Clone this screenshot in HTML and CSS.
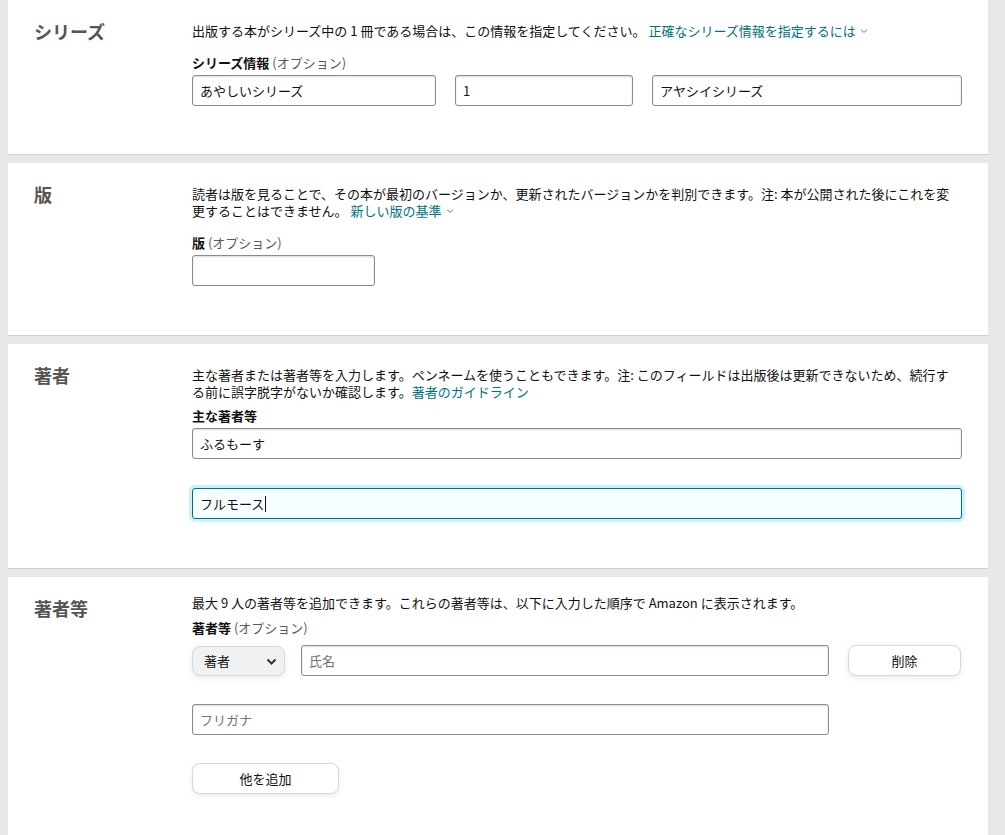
FILE: index.html
```html
<!DOCTYPE html>
<html lang="ja">
<head>
  <meta charset="UTF-8">
  <meta name="viewport" content="width=device-width, initial-scale=1" />
  <title>本の詳細</title>
  <link rel="stylesheet" href="styles.css">
</head>
<body>
  <div class="page">
    <!-- シリーズ -->
    <section class="card card-series">
      <h2 class="card-title">シリーズ</h2>
      <div class="card-body">
        <p class="desc">出版する本がシリーズ中の 1 冊である場合は、この情報を指定してください。 <a href="#" class="more">正確なシリーズ情報を指定するには<svg class="chev" width="8" height="6" viewBox="0 0 8 6"><path d="M1 1.5l3 3 3-3" fill="none" stroke="#767676" stroke-width="1"/></svg></a></p>
        <label class="field-label">シリーズ情報 <span class="opt">(オプション)</span></label>
        <div class="series-row">
          <input type="text" class="text-input" value="あやしいシリーズ">
          <input type="text" class="text-input" value="1">
          <input type="text" class="text-input" value="アヤシイシリーズ">
        </div>
      </div>
    </section>

    <!-- 版 -->
    <section class="card">
      <h2 class="card-title">版</h2>
      <div class="card-body">
        <p class="desc">読者は版を見ることで、その本が最初のバージョンか、更新されたバージョンかを判別できます。注: 本が公開された後にこれを変更することはできません。 <a href="#" class="more">新しい版の基準<svg class="chev" width="8" height="6" viewBox="0 0 8 6"><path d="M1 1.5l3 3 3-3" fill="none" stroke="#767676" stroke-width="1"/></svg></a></p>
        <label class="field-label">版 <span class="opt">(オプション)</span></label>
        <input type="text" class="text-input edition-input">
      </div>
    </section>

    <!-- 著者 -->
    <section class="card">
      <h2 class="card-title">著者</h2>
      <div class="card-body">
        <p class="desc">主な著者または著者等を入力します。ペンネームを使うこともできます。注: このフィールドは出版後は更新できないため、続行す<br>る前に誤字脱字がないか確認します。<a href="#" class="more">著者のガイドライン</a></p>
        <label class="field-label tight">主な著者等</label>
        <input type="text" class="text-input full" value="ふるもーす">
        <div class="focus-wrap">
          <input type="text" class="text-input full is-focused" value="フルモース">
          <span class="caret"></span>
        </div>
      </div>
    </section>

    <!-- 著者等 -->
    <section class="card card-last">
      <h2 class="card-title">著者等</h2>
      <div class="card-body">
        <p class="desc desc-up">最大 9 人の著者等を追加できます。これらの著者等は、以下に入力した順序で Amazon に表示されます。</p>
        <label class="field-label contrib-label">著者等 <span class="opt">(オプション)</span></label>
        <div class="contrib-row">
          <div class="select-wrap">
            <select class="role-select">
              <option>著者</option>
              <option>編集</option>
              <option>翻訳</option>
            </select>
            <svg class="select-chev" width="11" height="7" viewBox="0 0 11 7"><path d="M1.5 1.5l4 4 4-4" fill="none" stroke="#333" stroke-width="2"/></svg>
          </div>
          <input type="text" class="text-input name-input" placeholder="氏名">
          <button class="btn btn-delete">削除</button>
        </div>
        <input type="text" class="text-input kana-input" placeholder="フリガナ">
        <button class="btn btn-add">他を追加</button>
      </div>
    </section>
  </div>
</body>
</html>
```

FILE: styles.css
```css
* {
  box-sizing: border-box;
}

body {
  margin: 0;
  background: #e8e8e8;
  font-family: "Noto Sans CJK JP", "Noto Sans", "Liberation Sans", sans-serif;
  font-size: 13px;
  color: #0f1111;
}

.page {
  width: 980px;
  margin-left: 8px;
}

.card {
  display: flex;
  background: #fff;
  border-bottom: 1px solid #cfcfcf;
  padding: 22px 27px 49px 26px;
  margin-bottom: 8px;
}

.card-series {
  padding-bottom: 48px;
}

.card-last {
  margin-bottom: 0;
  min-height: 260px;
}

.card-title {
  width: 158px;
  flex-shrink: 0;
  margin: 0;
  font-size: 18px;
  line-height: 18px;
  font-weight: 700;
  color: #555;
}

.card-body {
  flex: 1;
  display: flex;
  flex-direction: column;
  align-items: flex-start;
}

.desc {
  margin: 0 0 15px;
  line-height: 17px;
  width: 758px;
}

.desc-up {
  margin-top: -5px;
  margin-bottom: 8px;
}

.more {
  color: #007185;
  text-decoration: none;
}

.chev {
  margin-left: 4px;
  vertical-align: 2px;
}

.field-label {
  font-weight: 700;
  line-height: 17px;
  margin-bottom: 4px;
}

.field-label.tight {
  margin-top: -8px;
}

.contrib-label {
  margin-bottom: 9px;
}

.opt {
  font-weight: 400;
  color: #565959;
}

.text-input {
  height: 31px;
  padding: 0 7px;
  border: 1px solid #888c8c;
  border-radius: 3px;
  box-shadow: 0 1px 2px rgba(15, 17, 17, 0.15) inset;
  font-family: inherit;
  font-size: 13px;
  color: #0f1111;
  background: #fff;
  outline: none;
}

.text-input::placeholder {
  color: #6f7373;
}

.series-row {
  display: grid;
  grid-template-columns: 244px 178px 310px;
  column-gap: 19px;
}

.edition-input {
  width: 183px;
}

.full {
  width: 770px;
}

.focus-wrap {
  position: relative;
  margin-top: 29px;
}

.is-focused {
  background: #f7feff;
  border-color: #007185;
  box-shadow: 0 0 0 3px #c8f3fa;
}

.caret {
  position: absolute;
  left: 73px;
  top: 8px;
  width: 1px;
  height: 16px;
  background: #0f1111;
}

.contrib-row {
  display: flex;
  align-items: center;
  width: 769px;
  height: 31px;
}

.select-wrap {
  position: relative;
  width: 93px;
  margin-right: 16px;
}

.role-select {
  appearance: none;
  -webkit-appearance: none;
  display: block;
  width: 93px;
  height: 30px;
  padding: 0 0 0 11px;
  border: 1px solid #d5d9d9;
  border-radius: 8px;
  background: #f0f2f2;
  box-shadow: 0 2px 5px rgba(213, 217, 217, 0.5);
  font-family: inherit;
  font-size: 13px;
  color: #0f1111;
}

.select-chev {
  position: absolute;
  right: 8px;
  top: 12px;
  pointer-events: none;
}

.name-input {
  width: 528px;
}

.btn {
  height: 31px;
  border: 1px solid #d5d9d9;
  border-radius: 8px;
  background: #fff;
  box-shadow: 0 2px 5px rgba(213, 217, 217, 0.5);
  font-family: inherit;
  font-size: 13px;
  color: #0f1111;
  cursor: pointer;
}

.btn-delete {
  width: 113px;
  margin-left: 19px;
}

.kana-input {
  width: 637px;
  margin-top: 28px;
}

.btn-add {
  width: 147px;
  margin-top: 28px;
}
```
